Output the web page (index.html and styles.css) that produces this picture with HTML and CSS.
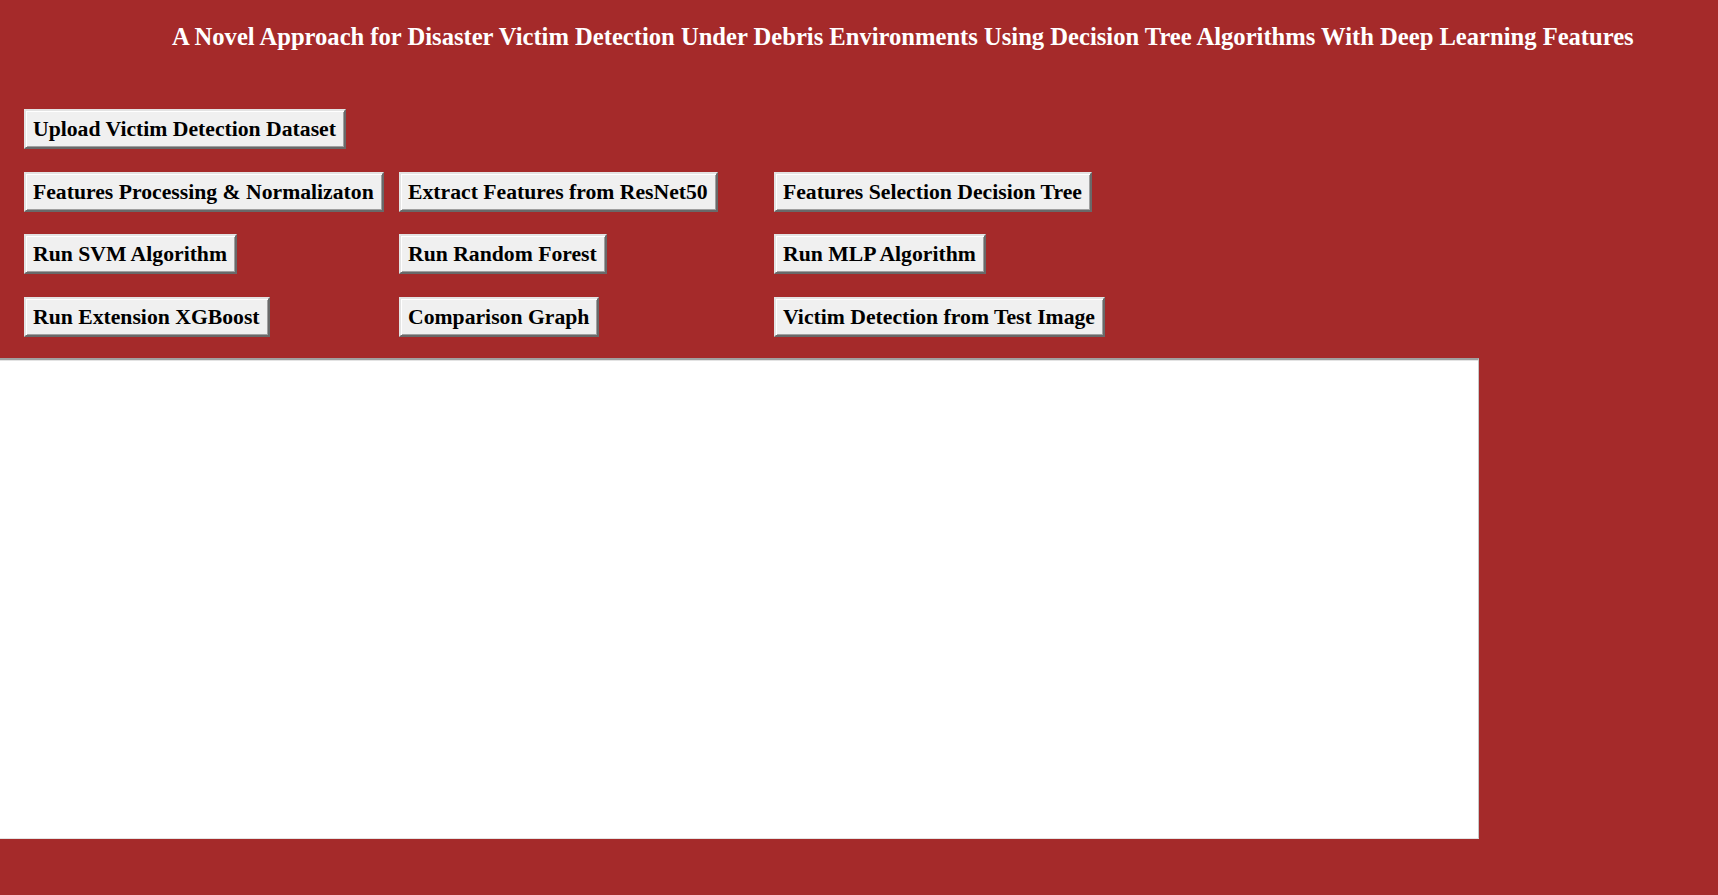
FILE: index.html
```html
<!DOCTYPE html>
<html>
<head>
<meta charset="utf-8">
<title>Disaster Victim Detection</title>
<link rel="stylesheet" href="styles.css">
</head>
<body>
<div class="app">
  <h1 class="title">A Novel Approach for Disaster Victim Detection Under Debris Environments Using Decision Tree Algorithms With Deep Learning Features</h1>
  <div class="controls">
    <button class="btn r1 c1">Upload Victim Detection Dataset</button>
    <button class="btn r2 c1">Features Processing &amp; Normalizaton</button>
    <button class="btn r2 c2">Extract Features from ResNet50</button>
    <button class="btn r2 c3">Features Selection Decision Tree</button>
    <button class="btn r3 c1">Run SVM Algorithm</button>
    <button class="btn r3 c2">Run Random Forest</button>
    <button class="btn r3 c3">Run MLP Algorithm</button>
    <button class="btn r4 c1">Run Extension XGBoost</button>
    <button class="btn r4 c2">Comparison Graph</button>
    <button class="btn r4 c3">Victim Detection from Test Image</button>
  </div>
  <div class="output"></div>
</div>
</body>
</html>
```

FILE: styles.css
```css
html, body {
  margin: 0;
  padding: 0;
  height: 100%;
  background: #a52a2a;
  overflow: hidden;
}
.app {
  font-family: "Liberation Serif", "Times New Roman", serif;
}
.title {
  margin: 0;
  padding: 23px 0 0 172px;
  font-size: 24.6px;
  line-height: 28px;
  font-weight: bold;
  color: #ffffff;
  white-space: nowrap;
}
.controls {
  display: grid;
  grid-template-columns: 375px 375px 375px;
  grid-template-rows: repeat(4, 40px);
  row-gap: 22.67px;
  justify-items: start;
  padding: 58px 0 0 24px;
}
.r1 { grid-row: 1; }
.r2 { grid-row: 2; }
.r3 { grid-row: 3; }
.r4 { grid-row: 4; }
.c1 { grid-column: 1; }
.c2 { grid-column: 2; }
.c3 { grid-column: 3; }
.btn {
  box-sizing: border-box;
  height: 40px;
  margin: 0;
  padding: 6px 8px 6px 7px;
  font-family: "Liberation Serif", "Times New Roman", serif;
  font-size: 21.7px;
  line-height: 24px;
  font-weight: bold;
  color: #000000;
  background: #f0f0f0;
  border: 2px solid;
  border-color: #e3e3e3 #696969 #696969 #e3e3e3;
  box-shadow: inset 1px 1px 0 #ffffff, inset -1px -1px 0 #a0a0a0;
  border-radius: 0;
  white-space: nowrap;
  cursor: default;
}
.output {
  box-sizing: border-box;
  margin-top: 21px;
  width: 1479px;
  height: 481px;
  background: #ffffff;
  border-top: 2px solid #a0a0a0;
  border-right: 1px solid #c8c8c8;
  border-bottom: 1px solid #e3e3e3;
  box-shadow: inset 0 1px 0 #e3e3e3;
}
```
